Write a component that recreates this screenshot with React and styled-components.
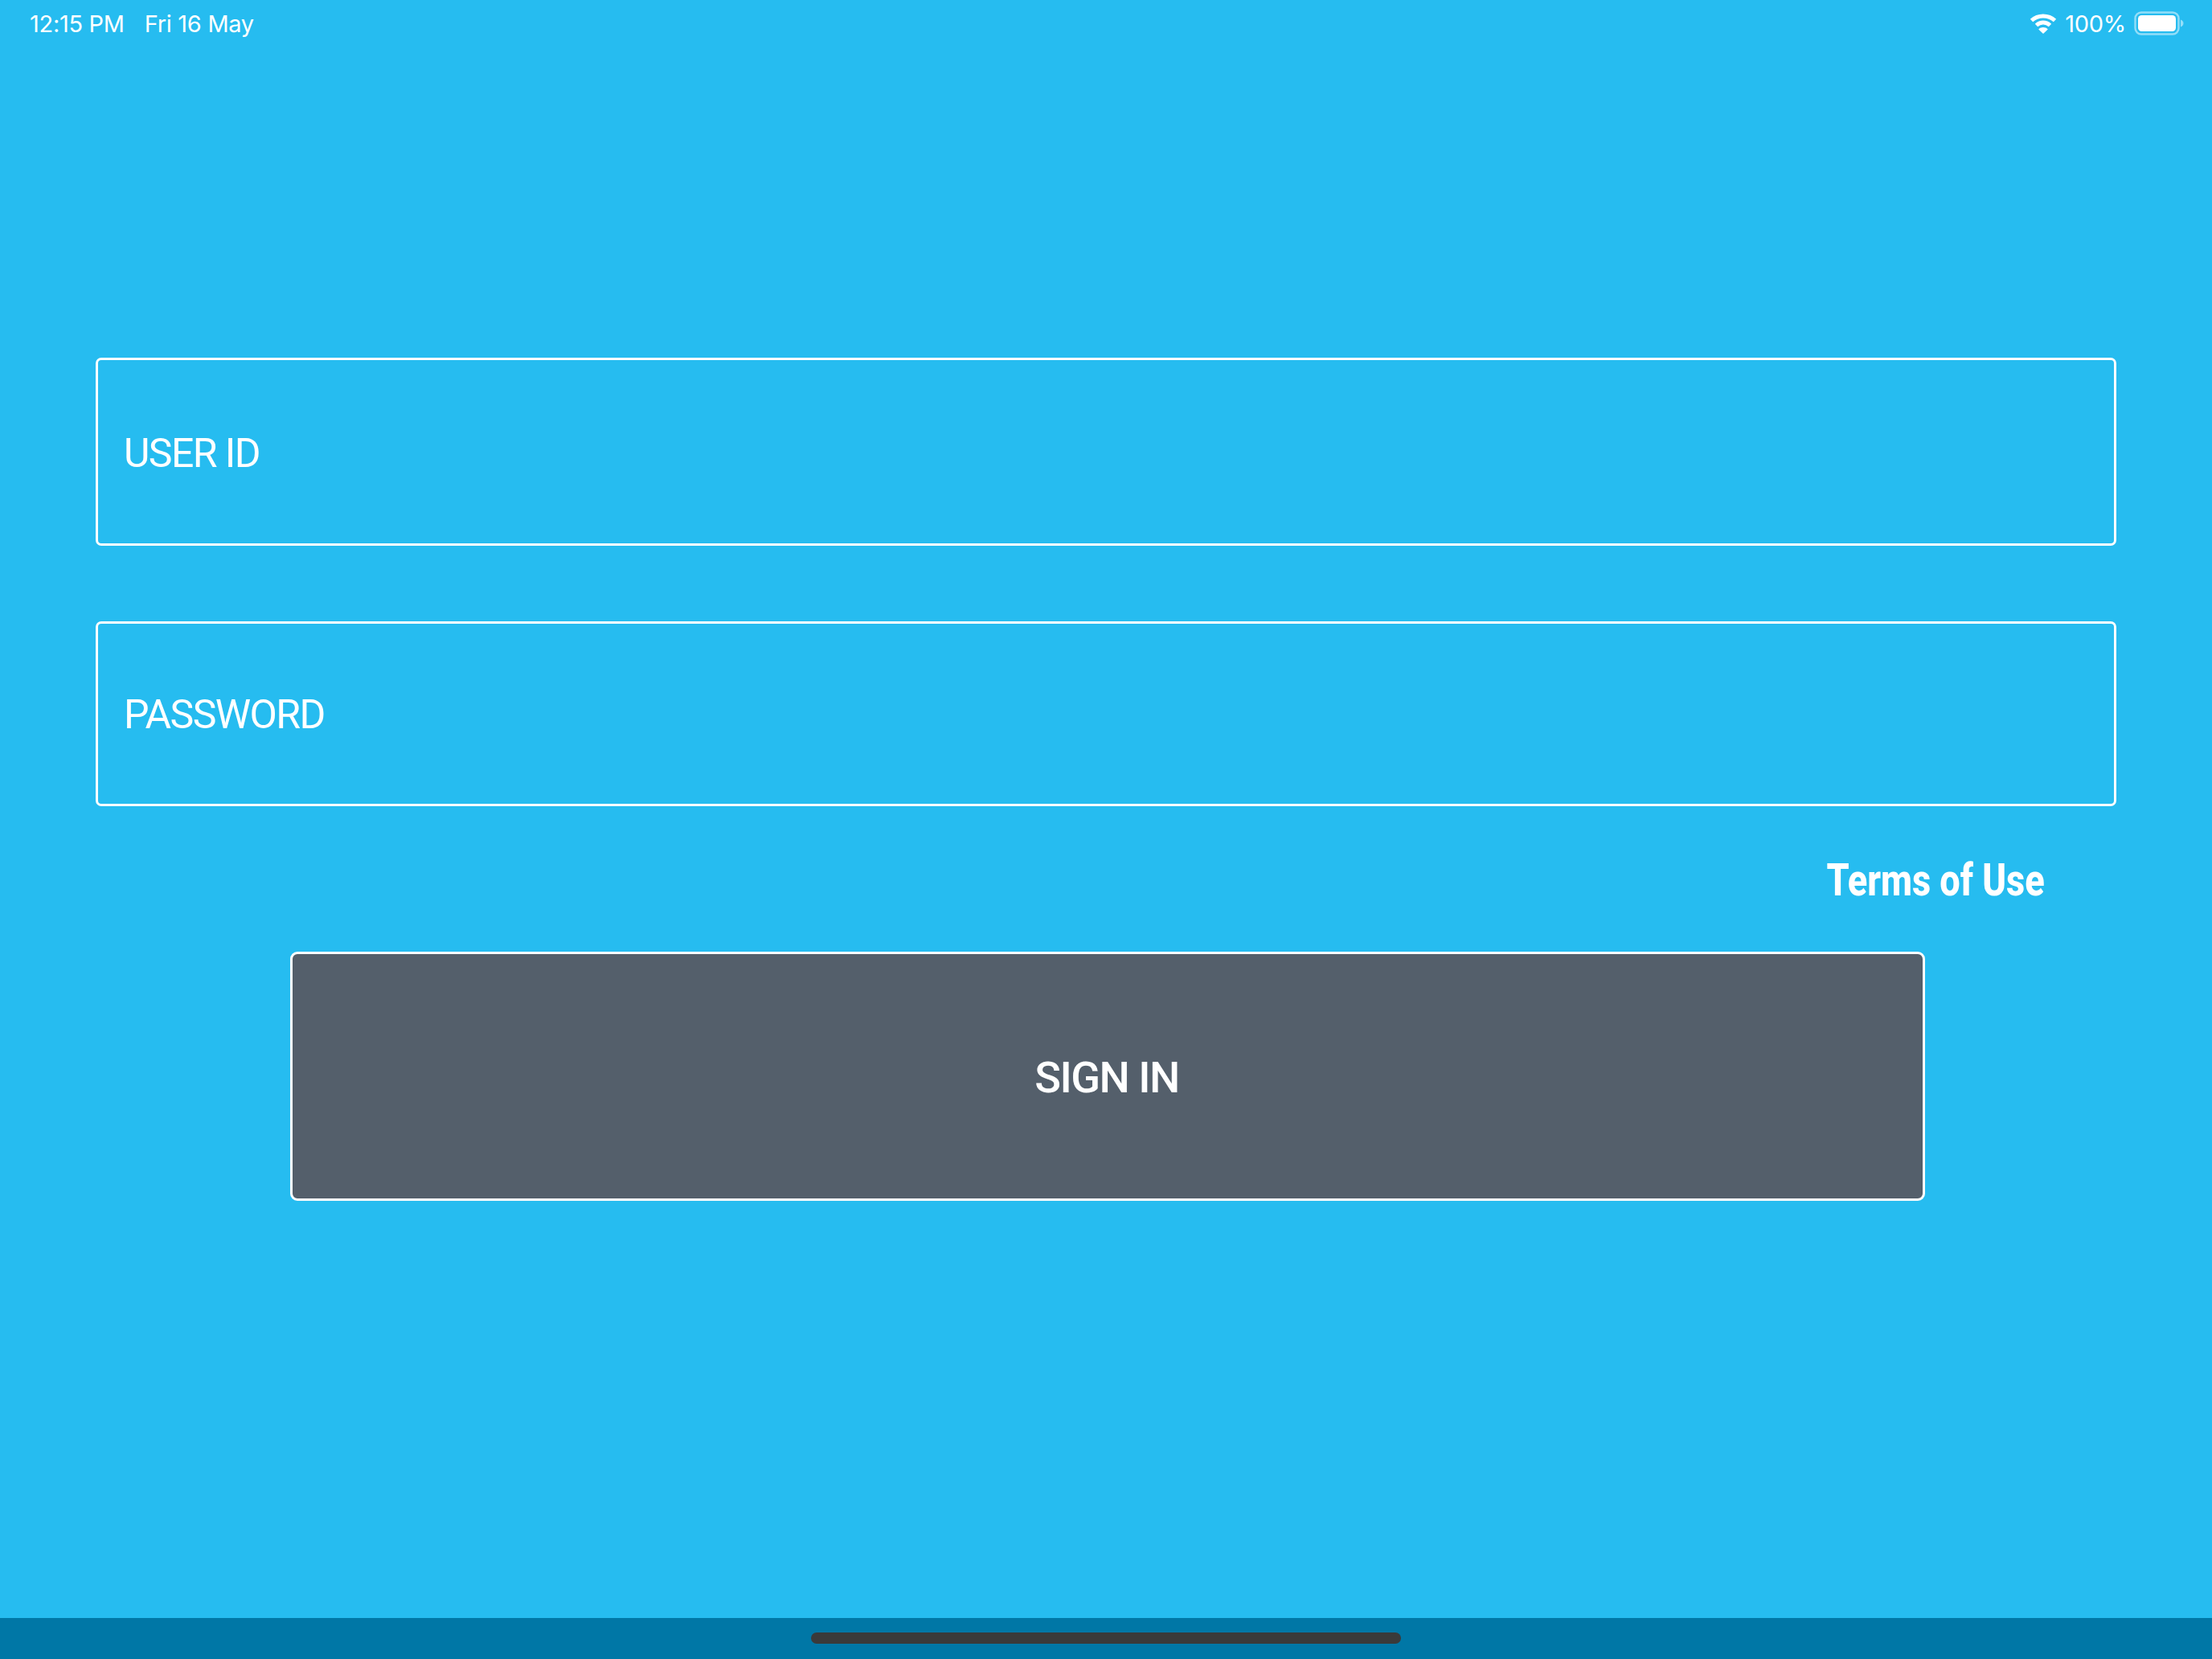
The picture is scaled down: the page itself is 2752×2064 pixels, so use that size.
import React from "react";
import styled, { createGlobalStyle } from "styled-components";

const Global = createGlobalStyle`
  html, body { margin: 0; padding: 0; background: #26bcf0; }
  * { box-sizing: border-box; }
`;

const Page = styled.div`
  width: 2752px;
  height: 2064px;
  display: flex;
  flex-direction: column;
  background: #26bcf0;
  color: #fff;
  font-family: Roboto, "Liberation Sans", sans-serif;
  overflow: hidden;
`;

const StatusBar = styled.div`
  height: 60px;
  padding: 0 35px 2px 37px;
  display: flex;
  align-items: center;
  justify-content: space-between;
  font-family: Inter, "Liberation Sans", sans-serif;
  font-size: 29px;
  font-weight: 400;
  letter-spacing: -0.3px;
`;

const StatusGroup = styled.div`
  display: flex;
  align-items: center;
  gap: ${(p) => p.$gap}px;
`;

const Form = styled.main`
  flex: 1;
  display: flex;
  flex-direction: column;
  padding: 385px 119px 0;
`;

const Field = styled.div`
  height: ${(p) => p.$height}px;
  margin-bottom: ${(p) => p.$below}px;
  padding: ${(p) => p.$top}px 32px 0;
  display: flex;
  align-items: center;
  border: 3px solid #fff;
  border-radius: 7px;
  font-size: 50px;
  font-weight: 400;
  letter-spacing: -1.6px;
`;

const TermsRow = styled.div`
  height: 181px;
  padding: 2px 89px 0 0;
  display: flex;
  align-items: center;
  justify-content: flex-end;
`;

const TermsLink = styled.a`
  display: inline-block;
  font-size: 55px;
  font-weight: 800;
  transform: scaleX(0.82);
  transform-origin: right center;
  white-space: nowrap;
`;

const SignInButton = styled.button`
  align-self: center;
  width: 2034px;
  height: 310px;
  margin-left: 4px;
  border: 3px solid #fff;
  border-radius: 9px;
  background: #545f6b;
  color: #fff;
  font-family: Roboto, "Liberation Sans", sans-serif;
  font-size: 54px;
  font-weight: 500;
  letter-spacing: -1.5px;
  padding: 3px 2px 0 0;
`;

const BottomBar = styled.div`
  height: 51px;
  background: #0077a6;
  display: flex;
  justify-content: center;
  padding-top: 18px;
`;

const HomeIndicator = styled.div`
  width: 734px;
  height: 14px;
  border-radius: 7px;
  background: #3a3a3a;
`;

const Wifi = () => (
  <svg width="34" height="26" viewBox="0 0 34 26" fill="none" style={{ display: "block" }}>
    <path d="M2.5 9.5C10.5 2 23.5 2 31.5 9.5" stroke="#fff" strokeWidth="5" strokeLinecap="butt" />
    <path d="M8.5 15.5C13.5 10.8 20.5 10.8 25.5 15.5" stroke="#fff" strokeWidth="5" />
    <path d="M17 26L11.2 20.4C14.4 17.3 19.6 17.3 22.8 20.4Z" fill="#fff" />
  </svg>
);

const Battery = () => (
  <svg width="62" height="30" viewBox="0 0 62 30" style={{ display: "block" }}>
    <rect x="1.5" y="1.5" width="54" height="27" rx="7.5" fill="none" stroke="#fff" strokeOpacity="0.5" strokeWidth="2.4" />
    <rect x="5" y="5" width="47" height="20" rx="4.5" fill="#fff" />
    <path d="M58 10.5C60.2 11.4 61.5 13 61.5 15S60.2 18.6 58 19.5Z" fill="#fff" fillOpacity="0.5" />
  </svg>
);

export default function App() {
  return (
    <Page>
      <Global />
      <StatusBar>
        <StatusGroup $gap={25}>
          <span>12:15 PM</span>
          <span>Fri 16 May</span>
        </StatusGroup>
        <StatusGroup $gap={10}>
          <Wifi />
          <span>100%</span>
          <Battery />
        </StatusGroup>
      </StatusBar>
      <Form>
        <Field $height={234} $below={94} $top={3}>USER ID</Field>
        <Field $height={230} $below={0} $top={2}>PASSWORD</Field>
        <TermsRow>
          <TermsLink>Terms of Use</TermsLink>
        </TermsRow>
        <SignInButton>SIGN IN</SignInButton>
      </Form>
      <BottomBar>
        <HomeIndicator />
      </BottomBar>
    </Page>
  );
}
